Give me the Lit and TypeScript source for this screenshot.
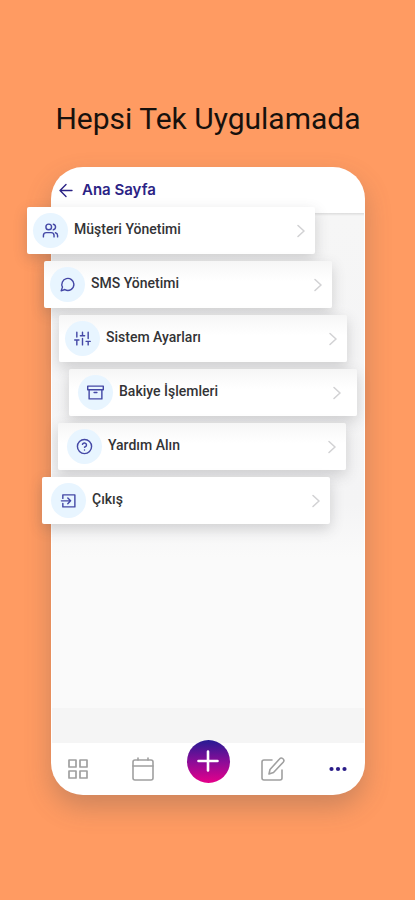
import { LitElement, html, css, svg } from "lit";
import { customElement } from "lit/decorators.js";
import { classMap } from "lit/directives/class-map.js";
import { styleMap } from "lit/directives/style-map.js";

const icons = {
  users: svg`<path d="M17 21v-2a4 4 0 0 0-4-4H6a4 4 0 0 0-4 4v2"/><circle cx="9.5" cy="7" r="4"/><path d="M22 21v-2a4 4 0 0 0-3-3.900M16 3.100a4 4 0 0 1 0 7.800"/>`,
  message: svg`<path d="M21 11.500a8.400 8.400 0 0 1-12.700 7.600L3 21l1.900-5.300A8.500 8.500 0 1 1 21 11.500z"/>`,
  sliders: svg`<path d="M4 21v-7M4 10V3M12 21v-9M12 8V3M20 21v-5M20 12V3M1 14h6M9 8h6M17 16h6"/>`,
  archive: svg`<path d="M21 8v13H3V8M1 3h22v5H1zM10 12h4"/>`,
  help: svg`<circle cx="12" cy="12" r="10"/><path d="M9.100 9a3 3 0 0 1 5.800 1c0 2-2.900 3-2.900 3M12 17v.1"/>`,
  exit: svg`<path d="M4 9V4h17v17H4v-5M2 12.500h13M11 8.500l4 4-4 4"/>`,
};

const items = [
  { label: "Müşteri Yönetimi", icon: icons.users, shift: -24 },
  { label: "SMS Yönetimi", icon: icons.message, shift: -7, shaded: true },
  { label: "Sistem Ayarları", icon: icons.sliders, shift: 8, shaded: true },
  { label: "Bakiye İşlemleri", icon: icons.archive, shift: 18, shaded: true, inset: true, deep: true },
  { label: "Yardım Alın", icon: icons.help, shift: 7, shaded: true, inset: true },
  { label: "Çıkış", icon: icons.exit, shift: -9, inset: true },
];

@customElement("app-root")
export class AppRoot extends LitElement {
  static styles = css`
    :host {
      display: block;
      box-sizing: border-box;
      min-height: 100vh;
      padding: 98px 50px 105px 51px;
      background: #ff9b62;
      font-family: Roboto, "Liberation Sans", sans-serif;
      overflow: hidden;
    }
    h1 {
      margin: 0 -40px 27px;
      font-size: 30px;
      line-height: 42px;
      font-weight: 400;
      text-align: center;
      color: #17110d;
      white-space: nowrap;
    }
    button {
      border: 0;
      margin: 0;
      padding: 0;
      background: none;
      font: inherit;
      color: inherit;
      cursor: pointer;
    }
    svg {
      display: block;
      fill: none;
      stroke: currentColor;
      stroke-width: 2;
      stroke-linecap: round;
      stroke-linejoin: round;
    }
    .phone {
      display: flex;
      flex-direction: column;
      border-radius: 32px;
      background: #fff;
      box-shadow: 0 12px 26px rgba(90, 80, 80, 0.3);
    }
    header {
      height: 46px;
      padding-left: 8px;
      display: flex;
      align-items: center;
      color: #2b2385;
    }
    .back {
      display: flex;
      align-items: center;
      gap: 8px;
      color: inherit;
      text-decoration: none;
    }
    h2 {
      margin: 0;
      font-family: Inter, sans-serif;
      font-size: 15px;
      line-height: 20px;
      font-weight: 600;
    }
    main {
      min-height: 530px;
      box-sizing: border-box;
      margin: 0 1px;
      background: linear-gradient(#f5f5f5 0 35px) bottom / 100% 35px no-repeat,
        linear-gradient(#dcdcdc, #f6f6f6 3px, #f4f4f5 55%, #fafafa 65%);
    }
    ul {
      list-style: none;
      margin: -6px -1px 0;
      padding: 0;
      display: grid;
      gap: 7px;
    }
    li {
      position: relative;
      width: calc(100% - 26px);
    }
    .card {
      box-sizing: border-box;
      width: 100%;
      height: 47px;
      padding: 0 8px 0 6px;
      display: flex;
      align-items: center;
      gap: 6px;
      border-radius: 2px;
      background: #fff;
      box-shadow: 0 5px 14px rgba(70, 70, 75, 0.22);
      color: #333336;
      font-size: 14px;
      line-height: 18px;
      font-weight: 500;
      text-align: left;
    }
    .card.shaded {
      background: linear-gradient(#f6f6f6, #fff 20px);
    }
    .card.inset {
      padding-left: 9px;
    }
    .card.deep {
      padding-right: 14px;
    }
    .disc {
      flex: none;
      display: grid;
      place-items: center;
      width: 35px;
      height: 35px;
      border-radius: 50%;
      background: #e8f5ff;
      color: #4448a6;
    }
    .label {
      flex: 1;
      padding-bottom: 3px;
    }
    .chevron {
      color: #d2d2d4;
    }
    nav {
      height: 52px;
      padding: 0 6px;
      display: flex;
      justify-content: space-between;
      align-items: center;
      color: #a0a0a0;
    }
    .tab {
      display: grid;
      place-items: center;
      width: 42px;
      height: 42px;
    }
    .tab.active {
      color: #2a1c88;
    }
    .add {
      display: grid;
      place-items: center;
      width: 43px;
      height: 43px;
      margin-bottom: 16px;
      border-radius: 50%;
      background: linear-gradient(#251b93, #8a0c98 50%, #e6008a);
      color: #fff;
    }
  `;

  render() {
    return html`
      <h1>Hepsi Tek Uygulamada</h1>
      <div class="phone">
        <header>
          <a class="back" href="#">
            <svg width="15" height="15" viewBox="0 0 15 15"><path d="M13 7.500H1.500M7 1.500l-6 6 6 6" stroke-width="1.400" /></svg>
            <h2>Ana Sayfa</h2>
          </a>
        </header>
        <main>
          <ul>
            ${items.map(
              (it) => html`<li style=${styleMap({ left: `${it.shift}px` })}>
                <button class=${classMap({ card: true, shaded: !!it.shaded, inset: !!it.inset, deep: !!it.deep })}>
                  <span class="disc"><svg width="17" height="17" viewBox="0 0 24 24">${it.icon}</svg></span>
                  <span class="label">${it.label}</span>
                  <svg class="chevron" width="12" height="14" viewBox="0 0 12 14"><path d="M3 1.500l6 5.500-6 5.500" stroke-width="1.600" /></svg>
                </button>
              </li>`
            )}
          </ul>
        </main>
        <nav>
          <button class="tab" aria-label="Panel">
            <svg width="20" height="20" viewBox="0 0 20 20"><path d="M1 1h7v7H1zM12 1h7v7h-7zM1 12h7v7H1zM12 12h7v7h-7z" stroke-width="1.700" /></svg>
          </button>
          <button class="tab" aria-label="Takvim">
            <svg width="22" height="24" viewBox="0 0 22 24"><g stroke-width="1.600"><rect x="1" y="3" width="20" height="20" rx="2" /><path d="M1 9h20M6 1v2M16 1v2" /></g></svg>
          </button>
          <button class="add" aria-label="Ekle">
            <svg width="22" height="22" viewBox="0 0 22 22"><path d="M11 1.500v19M1.500 11h19" stroke-width="2.600" /></svg>
          </button>
          <button class="tab" aria-label="Düzenle">
            <svg width="24" height="24" viewBox="0 0 24 24"><g stroke-width="1.600"><path d="M11 3H3a2 2 0 0 0-2 2v16a2 2 0 0 0 2 2h16a2 2 0 0 0 2-2v-8" /><path d="M18.500 2a2.400 2.400 0 0 1 3.700 3.200L12.500 15.500 8 17l1-4.500z" /></g></svg>
          </button>
          <button class="tab active" aria-label="Diğer">
            <svg width="18" height="6" viewBox="0 0 18 6"><g fill="currentColor" stroke="none"><circle cx="2.5" cy="3" r="2.1" /><circle cx="9" cy="3" r="2.1" /><circle cx="15.5" cy="3" r="2.1" /></g></svg>
          </button>
        </nav>
      </div>
    `;
  }
}
